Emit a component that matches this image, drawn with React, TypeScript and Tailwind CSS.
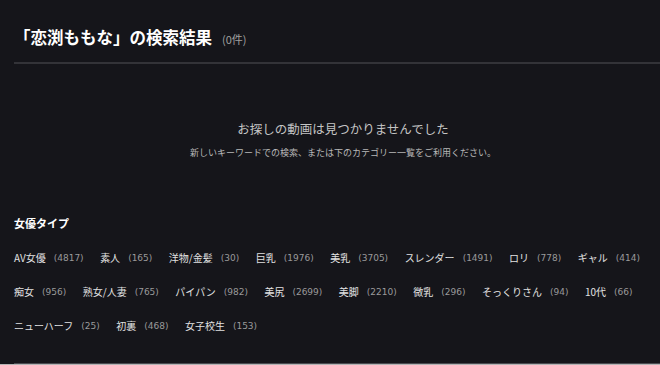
import React from "react";

const jp = { fontFamily: '"Noto Sans CJK JP", "Noto Sans", sans-serif' };
const num = { fontFamily: '"DejaVu Sans", "Liberation Sans", sans-serif' };

const rows: [string, number][] = [
  ["AV女優", 4817],
  ["素人", 165],
  ["洋物/金髪", 30],
  ["巨乳", 1976],
  ["美乳", 3705],
  ["スレンダー", 1491],
  ["ロリ", 778],
  ["ギャル", 414],
  ["痴女", 956],
  ["熟女/人妻", 765],
  ["パイパン", 982],
  ["美尻", 2699],
  ["美脚", 2210],
  ["微乳", 296],
  ["そっくりさん", 94],
  ["10代", 66],
  ["ニューハーフ", 25],
  ["初裏", 468],
  ["女子校生", 153],
];

export default function App() {
  return (
    <div className="w-[660px] h-[365px] overflow-hidden bg-[#15151a]" style={jp}>
      <div className="ml-[14px] w-[658px]">
        <div className="h-[48px] pt-[26px] flex items-baseline">
          <h1 className="text-[16.5px] leading-[22px] font-bold text-white">
            「恋渕ももな」の検索結果
          </h1>
          <span className="ml-[10px] text-[11px] leading-[22px] text-[#a0a0a0]">(0件)</span>
        </div>
        <div className="mt-[14px] h-[2px] bg-[#333338]" />
        <div className="mt-[57px] text-center">
          <p className="h-[16px] text-[12.5px] leading-[16px] text-[#c4c4c4]">お探しの動画は見つかりませんでした</p>
          <p className="mt-[10px] h-[12px] text-[9px] leading-[12px] text-[#b8b8b8]">
            新しいキーワードでの検索、または下のカテゴリー一覧をご利用ください。
          </p>
        </div>
        <h2 className="mt-[56px] h-[16px] text-[11px] leading-[16px] font-bold text-white">女優タイプ</h2>
        <div className="mt-[20px] flex flex-wrap gap-x-[16.5px] gap-y-[20px] w-[640px]">
          {rows.map(([name, count]) => (
            <div key={name} className="flex items-center h-[14px] whitespace-nowrap">
              <span className="text-[10px] leading-[14px] text-[#e2e2e2]">{name}</span>
              <span className="ml-[8px] text-[9px] leading-[14px] text-[#9a9a9a]" style={num}>
                ({count})
              </span>
            </div>
          ))}
        </div>
        <div className="mt-[30px] h-px bg-[#4a4a50]" />
      </div>
      <div className="h-[3px] w-full bg-[#b4b4b4]" />
    </div>
  );
}
